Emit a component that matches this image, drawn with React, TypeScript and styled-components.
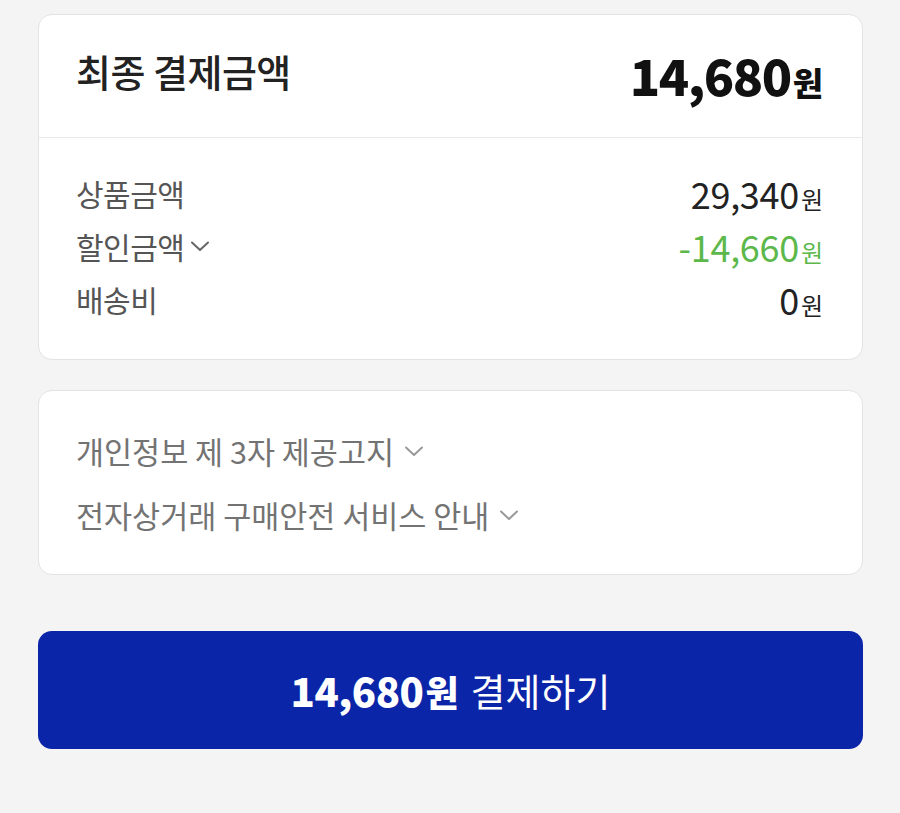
import React from "react";
import styled, { createGlobalStyle } from "styled-components";

const GlobalStyle = createGlobalStyle`
  html, body {
    margin: 0;
    padding: 0;
    background: #f4f4f4;
    font-family: "Noto Sans CJK KR", "Noto Sans", sans-serif;
  }
`;

const Page = styled.div`
  min-height: 813px;
  padding: 14px 37px 0 38px;
  box-sizing: border-box;
  display: flex;
  flex-direction: column;
  background: #f4f4f4;
`;

const Card = styled.div<{ $gap?: number }>`
  background: #fff;
  border: 1px solid #e3e3e3;
  border-radius: 14px;
  margin-bottom: ${(p) => p.$gap ?? 0}px;
  overflow: hidden;
`;

const Header = styled.div`
  height: 122px;
  display: flex;
  align-items: center;
  justify-content: space-between;
  padding: 0 39px 0 37px;
  border-bottom: 1px solid #e9e9e9;
`;

const HeaderTitle = styled.span`
  font-size: 38px;
  font-weight: 500;
  color: #222;
  letter-spacing: -0.5px;
  line-height: 1;
  margin-top: -10px;
`;

const HeaderAmount = styled.span`
  font-size: 50px;
  font-weight: 900;
  color: #111;
  letter-spacing: -1.5px;
  line-height: 1;
  display: flex;
  align-items: baseline;
  margin-top: -4px;
`;

const Won = styled.span<{ $size: number; $weight?: number }>`
  font-size: ${(p) => p.$size}px;
  font-weight: ${(p) => p.$weight ?? 400};
  letter-spacing: 0;
  margin-left: 2px;
`;

const Body = styled.div<{ $top: number; $bottom: number }>`
  padding: ${(p) => p.$top}px 39px ${(p) => p.$bottom}px 37px;
  display: flex;
  flex-direction: column;
`;

const Row = styled.div`
  height: 53px;
  display: flex;
  align-items: center;
  justify-content: space-between;
`;

const Label = styled.span`
  font-size: 30px;
  color: #555;
  display: flex;
  align-items: center;
  gap: 6px;
  letter-spacing: -0.5px;
  line-height: 1;
  margin-top: -2px;
`;

const Value = styled.span<{ $color?: string }>`
  font-size: 36px;
  color: ${(p) => p.$color ?? "#222"};
  letter-spacing: -0.3px;
  line-height: 1;
  display: flex;
  align-items: baseline;
  margin-top: -2px;
`;

const NoticeRow = styled.div`
  height: 64px;
  display: flex;
  align-items: center;
`;

const NoticeText = styled.span`
  font-size: 30.5px;
  color: #737373;
  display: flex;
  align-items: center;
  gap: 10px;
  letter-spacing: 0;
  line-height: 1;
`;

const PayButton = styled.button`
  height: 118px;
  width: 100%;
  border: none;
  border-radius: 14px;
  background: #0b25a8;
  color: #fff;
  display: flex;
  align-items: center;
  justify-content: center;
  gap: 12px;
  font-family: "Noto Sans CJK KR", sans-serif;
  line-height: 1;
  cursor: pointer;
`;

const PayAmount = styled.span`
  font-size: 40px;
  font-weight: 800;
  letter-spacing: -0.5px;
  display: flex;
  align-items: baseline;
`;

const PayLabel = styled.span`
  font-size: 38px;
  font-weight: 400;
  letter-spacing: 0;
`;

const Chevron = ({ color = "#777" }: { color?: string }) => (
  <svg width="20" height="14" viewBox="0 0 20 14" fill="none">
    <path d="M2 3.5 L10 11 L18 3.5" stroke={color} strokeWidth="2" strokeLinecap="round" strokeLinejoin="round" />
  </svg>
);

export default function App() {
  return (
    <>
      <GlobalStyle />
      <Page>
        <Card $gap={30}>
          <Header>
            <HeaderTitle>최종 결제금액</HeaderTitle>
            <HeaderAmount>
              14,680<Won $size={33} $weight={800}>원</Won>
            </HeaderAmount>
          </Header>
          <Body $top={29} $bottom={33}>
            <Row>
              <Label>상품금액</Label>
              <Value>
                29,340<Won $size={24}>원</Won>
              </Value>
            </Row>
            <Row>
              <Label>
                할인금액 <Chevron color="#666" />
              </Label>
              <Value $color="#5cb84a">
                -14,660<Won $size={24}>원</Won>
              </Value>
            </Row>
            <Row>
              <Label>배송비</Label>
              <Value>
                0<Won $size={24}>원</Won>
              </Value>
            </Row>
          </Body>
        </Card>
        <Card $gap={56}>
          <Body $top={28} $bottom={27}>
            <NoticeRow>
              <NoticeText>
                개인정보 제 3자 제공고지 <Chevron color="#999" />
              </NoticeText>
            </NoticeRow>
            <NoticeRow>
              <NoticeText>
                전자상거래 구매안전 서비스 안내 <Chevron color="#999" />
              </NoticeText>
            </NoticeRow>
          </Body>
        </Card>
        <PayButton>
          <PayAmount>
            14,680<Won $size={36} $weight={800}>원</Won>
          </PayAmount>
          <PayLabel>결제하기</PayLabel>
        </PayButton>
      </Page>
    </>
  );
}
